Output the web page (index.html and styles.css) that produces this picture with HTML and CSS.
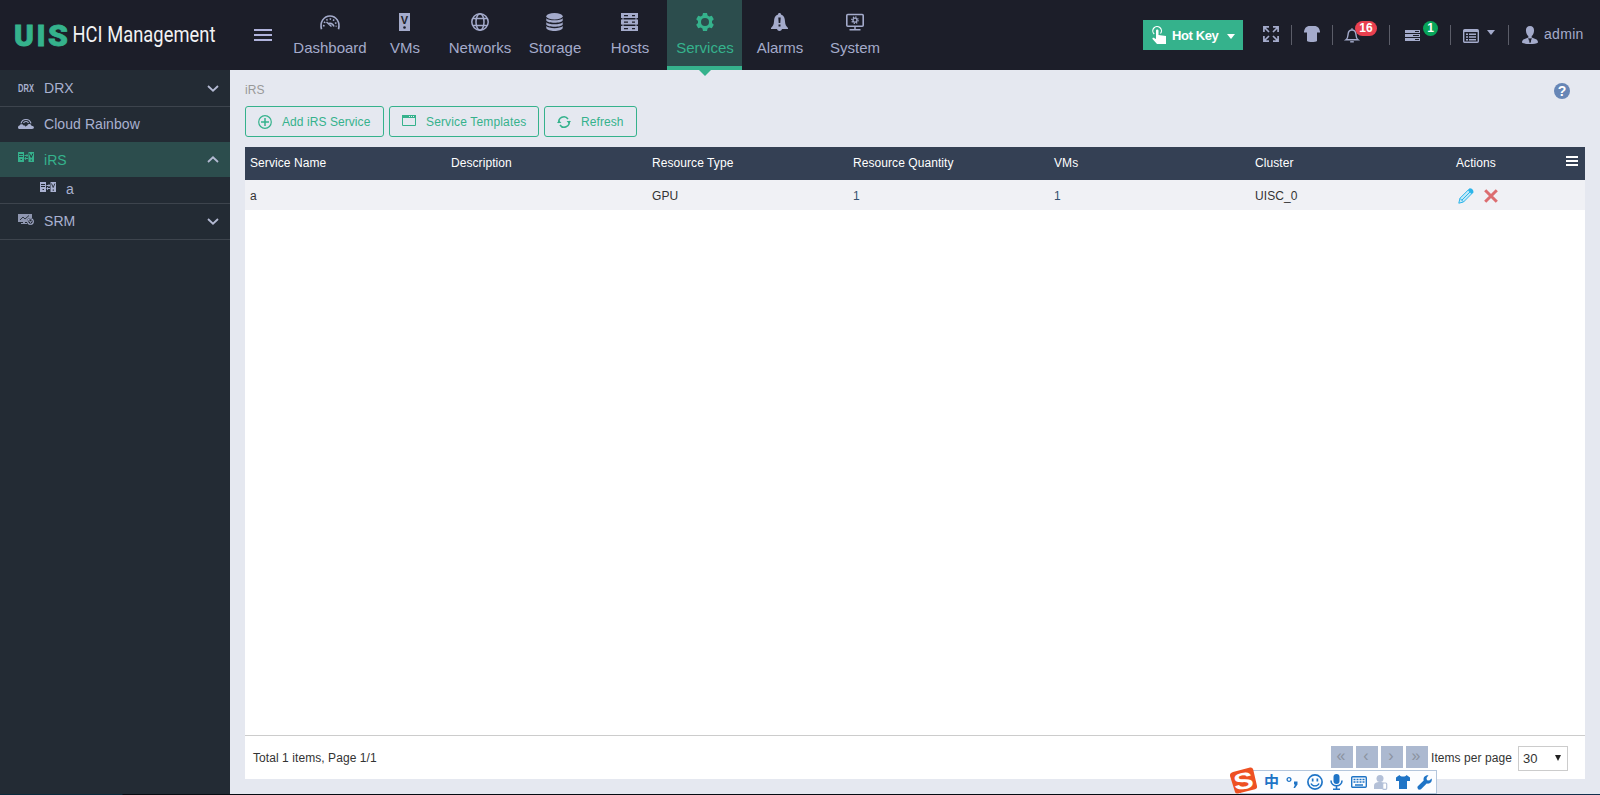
FILE: index.html
```html
<!DOCTYPE html>
<html lang="en">
<head>
    <meta charset="UTF-8">
    <meta name="viewport" content="width=device-width, initial-scale=1.0">
    <title>UIS HCI Management</title>
    <link rel="stylesheet" href="styles.css">
</head>
<body>
    <svg class="defs">
        <symbol id="irs" viewBox="0 0 16 10">
            <path fill="currentColor" fill-rule="evenodd" d="M0 0h6v10H0zM1 2v1h4V2zM1 4v1h4V4zM2.500 7v1H4V7zM10.500 0H16v10h-5.500zM12.700 7.500v1.200h1.200V7.500z"/>
            <path stroke="currentColor" fill="none" d="M6.500 3.500h3.500M6.500 6.500h3.500M9 2.200v2.600M7.500 5.200v2.600"/>
            <path class="cut" d="M11.500 1.500l1.700 4 1.700-4"/>
        </symbol>
    </svg>

    <header class="header">
        <div class="logo">
            <svg width="230" height="70">
                <text class="logo-mark" y="45.500"><tspan x="14" textLength="20" lengthAdjust="spacingAndGlyphs">U</tspan><tspan x="36.500">I</tspan><tspan x="48" textLength="20" lengthAdjust="spacingAndGlyphs">S</tspan></text>
                <text class="logo-name" x="72.500" y="42" textLength="143" lengthAdjust="spacingAndGlyphs">HCI Management</text>
            </svg>
        </div>
        <div class="menu-toggle"><span></span><span></span><span></span></div>
        <nav class="nav">
            <a class="nav-item">
                <svg width="22" height="18" viewBox="0 0 22 18" fill="none" stroke="currentColor"><path stroke-width="1.600" d="M2.500 16.200C.5 9 5 3 11 3s10.500 6 8.500 13.200"/><path stroke-width="1.700" stroke-dasharray="1.500 2" d="M4.800 13.500C4.500 9 7.500 6 11 6s6.500 3 6.200 7.500"/><path stroke-width="1.500" d="M7.500 9l5 4.500M9.500 10.500c3-.8 4.500.5 5.500 3"/></svg>
                <span>Dashboard</span>
            </a>
            <a class="nav-item">
                <svg width="11" height="18" viewBox="0 0 11 18"><path fill="currentColor" d="M0 0h11v18H0z"/><text class="vm-letter" x="5.500" y="10.500">V</text><circle class="dark" cx="5.500" cy="14.500" r="1.300"/></svg>
                <span>VMs</span>
            </a>
            <a class="nav-item">
                <svg width="18" height="18" viewBox="0 0 18 18" fill="none" stroke="currentColor" stroke-width="1.500"><circle cx="9" cy="9" r="8.200"/><ellipse cx="9" cy="9" rx="4" ry="8.200"/><path d="M2 5.500h14M2 12.500h14"/></svg>
                <span>Networks</span>
            </a>
            <a class="nav-item">
                <svg width="17" height="18" viewBox="0 0 17 18" fill="currentColor"><ellipse cx="8.500" cy="3.200" rx="8.200" ry="3.200"/><path d="M.3 5.200c2 2.700 14.400 2.700 16.400 0v2.300c-1 3-15.400 3-16.400 0zM.3 9.200c2 2.700 14.400 2.700 16.400 0v2.200c-1 3-15.400 3-16.400 0zM.3 13.100c2 2.700 14.400 2.700 16.400 0v1.900c-1 4-15.400 4-16.400 0z"/></svg>
                <span>Storage</span>
            </a>
            <a class="nav-item">
                <svg width="17" height="18" viewBox="0 0 17 18"><path fill="currentColor" d="M0 0h17v5H0zM0 6.500h17v5H0zM0 13h17v5H0zM1.500 5h1v9h-1zM14.500 5h1v9h-1z"/><path class="dark" d="M3 2h4v1.200H3zM11 2h3v1.200h-3zM3 8.500h4v1.200H3zM11 8.500h3v1.200h-3zM3 15h4v1.200H3zM11 15h3v1.200h-3z"/></svg>
                <span>Hosts</span>
            </a>
            <a class="nav-item active">
                <svg width="18" height="18" viewBox="0 0 18 18"><path fill="currentColor" fill-rule="evenodd" d="M7 0h4l.6 2.600 1.700 1 2.500-.8 2 3.400L16 8v2l1.800 1.800-2 3.400-2.500-.8-1.700 1L11 18H7l-.6-2.600-1.700-1-2.500.8-2-3.400L2 10V8L.2 6.200l2-3.400 2.500.8 1.700-1zM9 5a4 4 0 1 0 0 8 4 4 0 0 0 0-8z"/></svg>
                <span>Services</span>
            </a>
            <a class="nav-item">
                <svg width="17" height="18" viewBox="0 0 17 18"><path fill="currentColor" d="M8.500 0c1 0 1.500.7 1.500 1.500 3 1 3.800 3.500 4 7 .2 3 1 4.500 3 6.500v1H11c-.5 2.600-4.500 2.600-5 0H0v-1c2-2 2.800-3.500 3-6.500.2-3.500 1-6 4-7C7 .7 7.500 0 8.500 0z"/><path class="dark" d="M7.300 4.500h2.400l-.4 5.500H7.700zM7.500 11.500h2v2h-2z"/></svg>
                <span>Alarms</span>
            </a>
            <a class="nav-item">
                <svg width="18" height="18" viewBox="0 0 18 18" fill="none" stroke="currentColor"><rect x=".8" y="1.500" width="16.400" height="11.800" rx="1" stroke-width="1.600"/><path stroke-width="1.500" d="M9 13v3M3.500 16.800h11"/><circle cx="9" cy="7.200" r="2" stroke-width="1.300"/><circle cx="9" cy="7.200" r="3.200" stroke-width="1.300" stroke-dasharray="1.200 1.310"/></svg>
                <span>System</span>
            </a>
        </nav>
        <div class="tools">
            <button class="hot-key">
                <svg width="15" height="18" viewBox="0 0 15 18"><path fill="none" stroke="#fff" stroke-width="1.200" d="M2.200 8A4.300 4.300 0 1 1 8.500 7.500"/><path fill="#fff" d="M4 4.500C4 3 6.500 3 6.500 4.500V9l7.500 1v8H5l-4.500-5c-.5-1.300 1.200-1.500 2-.8L4 13z"/></svg>
                <span>Hot Key</span>
                <i class="caret"></i>
            </button>
            <div class="tool tool-expand">
                <svg width="16" height="16" viewBox="0 0 16 16" fill="none" stroke="currentColor" stroke-width="1.700"><path d="M6 .9H.9V6M10 .9h5.100V6M6 15.100H.9V10M10 15.100h5.100V10M1 1l5 5M15 1l-5 5M1 15l5-5M15 15l-5-5"/></svg>
            </div>
            <div class="tool tool-skin">
                <svg width="16" height="16" viewBox="0 0 16 16"><path fill="currentColor" d="M4.500 0h7c2.500.5 4 2.500 4.500 5.500v1h-3V15c-1.500 1.300-8.500 1.300-10 0V6.500H0v-1C.5 2.500 2 .5 4.500 0z"/></svg>
            </div>
            <div class="tool tool-alarm">
                <svg width="14" height="15" viewBox="0 0 14 15" fill="none" stroke="currentColor" stroke-width="1.400"><path d="M1 11.800c2-1.500 1.900-3.500 2.100-5.800C3.400 3.300 4.800 2 7 2s3.600 1.300 3.900 4c.2 2.300.1 4.300 2.100 5.800zM7 2V.3"/><path d="M5.200 13.800h3.600"/></svg>
                <span class="badge badge-red">16</span>
            </div>
            <div class="tool tool-task">
                <svg width="15" height="11" viewBox="0 0 15 11"><path fill="currentColor" d="M0 0h15v3H0zM0 4h15v3H0zM0 8h15v3H0z"/><path class="dark" d="M10 1h4v1h-4zM8 5h6v1H8zM10 9h4v1h-4z"/></svg>
                <span class="badge badge-green">1</span>
            </div>
            <div class="tool tool-list">
                <svg width="16" height="14" viewBox="0 0 16 14"><rect x=".7" y=".7" width="14.600" height="12.600" rx="1" fill="none" stroke="currentColor" stroke-width="1.400"/><path fill="currentColor" d="M1 1h14v2H1zM3 4.500h2v1.500H3zM6 4.500h7v1.500H6zM3 7.200h2v1.500H3zM6 7.200h7v1.500H6zM3 10h2v1.500H3zM6 10h7v1.500H6z"/></svg>
                <i class="caret"></i>
            </div>
            <div class="tool tool-user">
                <svg width="16" height="18" viewBox="0 0 16 18"><path fill="currentColor" d="M8 0c3 0 4.300 2 4 5-.2 2.500-1 4-2.300 5v1.500l4.300 1.700c1.500.6 2 2 2 3.300-2 2-14 2-16 0 0-1.300.5-2.700 2-3.300l4.300-1.700V10C5 9 4.200 7.500 4 5c-.3-3 1-5 4-5z"/><path class="dark" d="M6 11.500l1.500 5-.2-3.500zM10 11.500l-1.500 5 .2-3.500zM7.500 12h1l.5 4-1 1-1-1z"/></svg>
                <span>admin</span>
            </div>
        </div>
    </header>

    <div class="wrapper">
        <aside class="sidebar">
            <div class="side-item line">
                <svg class="side-icon" width="16" height="10"><text class="drx" x="0" y="9" textLength="16" lengthAdjust="spacingAndGlyphs">DRX</text></svg>
                <span>DRX</span>
                <svg class="arrow" width="12" height="7" viewBox="0 0 12 7"><path d="M1 1l5 4.700L11 1"/></svg>
            </div>
            <div class="side-item rainbow">
                <svg class="side-icon" width="16" height="10" viewBox="0 0 16 10"><path fill="none" stroke="currentColor" stroke-width="1.200" d="M3 4.300C4.500-.8 11.500-.8 13 4.300M5.500 4c1-2 4-2 5 0"/><path fill="currentColor" d="M0 8.500c0-1.500 1-2 1.700-2C2 4.800 5 4.800 5.500 6.500 7 6.300 7.600 7 7.700 8c.1-.7.800-1.200 1.500-1.200C9.700 4.500 13 4.500 13.500 6.800c3 0 3.300 3.200.5 3.200H1.500C.5 10 0 9.300 0 8.500z"/></svg>
                <span>Cloud Rainbow</span>
            </div>
            <div class="side-item active">
                <svg class="side-icon raised" width="16" height="10"><use href="#irs"/></svg>
                <span>iRS</span>
                <svg class="arrow" width="12" height="7" viewBox="0 0 12 7"><path d="M1 6l5-4.700L11 6"/></svg>
            </div>
            <div class="side-sub line">
                <svg class="side-icon" width="16" height="10"><use href="#irs"/></svg>
                <span>a</span>
            </div>
            <div class="side-item line srm">
                <svg class="side-icon raised" width="16" height="11" viewBox="0 0 16 11"><path fill="currentColor" opacity=".8" d="M0 0h14v4h-3l-2 2v2H7v1h2v1H3V9h2V8H0z"/><path class="cut" d="M2 6l3-3 2 2 4-3.500"/><circle cx="12.500" cy="7.500" r="2.800" fill="none" stroke="currentColor" stroke-width="1.100"/><path fill="none" stroke="currentColor" d="M11.300 6.500l1.200 2 1.200-2"/></svg>
                <span>SRM</span>
                <svg class="arrow" width="12" height="7" viewBox="0 0 12 7"><path d="M1 1l5 4.700L11 1"/></svg>
            </div>
        </aside>

        <main class="content">
            <div class="crumb">
                <span>iRS</span>
                <span class="help">?</span>
            </div>
            <div class="buttons">
                <button class="btn btn-add">
                    <svg width="14" height="14" viewBox="0 0 14 14" fill="none" stroke="currentColor" stroke-width="1.200"><circle cx="7" cy="7" r="6.300"/><path stroke-width="1.500" d="M7 3v8M3 7h8"/></svg>
                    <span>Add iRS Service</span>
                </button>
                <button class="btn btn-templates">
                    <svg width="14" height="11" viewBox="0 0 14 11"><path fill="none" stroke="currentColor" d="M.5.5h13v10H.5z"/><path fill="currentColor" d="M0 0h14v3H0z"/><path stroke="#e5e8f0" stroke-dasharray="1 1" d="M7 1.500h6"/></svg>
                    <span>Service Templates</span>
                </button>
                <button class="btn btn-refresh">
                    <svg width="14" height="12" viewBox="0 0 14 12"><path fill="none" stroke="currentColor" stroke-width="1.500" d="M2 7A5 5 0 0 1 11 3M12 5a5 5 0 0 1-9 4"/><path fill="currentColor" d="M0 7h4.400L2 4.300zM9.600 5H14l-2 2.700z"/></svg>
                    <span>Refresh</span>
                </button>
            </div>
            <div class="panel">
                <div class="row head">
                    <span>Service Name</span>
                    <span>Description</span>
                    <span>Resource Type</span>
                    <span>Resource Quantity</span>
                    <span>VMs</span>
                    <span>Cluster</span>
                    <span>Actions</span>
                    <div class="columns-toggle"><i></i><i></i><i></i></div>
                </div>
                <div class="row">
                    <span>a</span>
                    <span></span>
                    <span>GPU</span>
                    <span><a>1</a></span>
                    <span><a>1</a></span>
                    <span>UISC_0</span>
                    <span class="actions">
                        <svg width="16" height="16" viewBox="0 0 16 16"><path fill="#c4e9f8" stroke="#2cb5ea" d="M.8 15.200l1.200-5L11 1.200c1.200-1 4.500 2 3.600 3.600L5.500 14zM2.200 10.500l3.200 3.300M3.800 12.200l8.700-8.700"/><path fill="#2cb5ea" d="M10 2.500l1.500-1.700c2-1 4.500 1.500 3.700 3.500L13.500 6z"/></svg>
                        <svg width="14" height="14" viewBox="0 0 14 14"><path stroke="#dc6d70" stroke-width="3" d="M1.200 1.200l11.600 11.600M12.800 1.200L1.200 12.800"/></svg>
                    </span>
                </div>
                <div class="footer">
                    <span>Total 1 items, Page 1/1</span>
                    <div class="pager">
                        <b>«</b><b>‹</b><b>›</b><b>»</b>
                        <span>Items per page</span>
                        <div class="select"><span>30</span><i></i></div>
                    </div>
                </div>
            </div>
        </main>
    </div>

    <div class="ime">
        <svg class="ime-logo" width="30" height="28" viewBox="0 0 30 28"><path fill="#ee5123" d="M4 5L21 .5q2.500-.5 3.200 2L28 19q.5 2.500-2 3.200L9 26.500q-2.500.5-3-1.500L1 9Q.5 6 4 5z"/><text x="14.500" y="22" transform="rotate(-10 14 14)" textLength="20" lengthAdjust="spacingAndGlyphs">S</text></svg>
        <span class="ime-zh">中</span>
        <svg width="13" height="14" viewBox="0 0 13 14"><circle cx="3" cy="4.500" r="1.900" fill="none" stroke="currentColor" stroke-width="1.300"/><path fill="currentColor" d="M8 6.500h3.500V9.500L9 13H7.500L9 9.500H8z"/></svg>
        <svg width="16" height="16" viewBox="0 0 16 16"><circle cx="8" cy="8" r="7.100" fill="none" stroke="currentColor" stroke-width="1.700"/><path fill="currentColor" d="M4.800 4.500h1.700v3H4.800zM9.500 4.500h1.700v3H9.500z"/><path fill="none" stroke="currentColor" stroke-width="1.400" d="M4 9.500c1.500 3.200 6.500 3.200 8 0"/></svg>
        <svg width="13" height="16" viewBox="0 0 13 16"><rect x="3.500" y="0" width="6" height="10" rx="3" fill="currentColor"/><path fill="none" stroke="currentColor" stroke-width="1.600" d="M1 6.500c0 7 11 7 11 0M6.500 12v3M3 15.200h7"/></svg>
        <svg width="16" height="12" viewBox="0 0 16 12"><rect x=".7" y=".7" width="14.600" height="10.600" rx="1" fill="none" stroke="currentColor" stroke-width="1.400"/><path stroke="currentColor" stroke-width="1.700" stroke-dasharray="2 1" d="M2.500 3.500h11M2.500 6h11"/><path stroke="currentColor" stroke-width="1.500" d="M4 9h8"/></svg>
        <svg class="faded" width="14" height="15" viewBox="0 0 14 15"><circle cx="6" cy="3.500" r="3.500" fill="currentColor"/><path fill="currentColor" d="M0 14V11c0-3 2-4 6-4 2 0 3 .3 4 1v6z"/><rect x="8.700" y="8" width="4" height="6.300" rx="1" fill="#fff" stroke="currentColor" stroke-width="1.200"/></svg>
        <svg width="14" height="14" viewBox="0 0 14 14"><path fill="currentColor" d="M3.500 0c1 2 6 2 7 0L14 2.500V6h-3v8H3V6H0V2.500z"/></svg>
        <svg width="15" height="15" viewBox="0 0 15 15"><path fill="currentColor" d="M11.500.3L9.500 3l.5 2.300 2.200.3L14.700 3.500c.8 3.500-2 5.800-5 5L4 14.300c-2 1.500-4.500-1-3.200-3L6.700 5.500C6 2.500 8 0 11.500.3z"/></svg>
    </div>
    <div class="taskbar"></div>
</body>
</html>
```
FILE: styles.css
```css
* {
    box-sizing: border-box;
}

body {
    margin: 0;
    height: 795px;
    overflow: hidden;
    font-family: "Liberation Sans", Arial, sans-serif;
    font-size: 12px;
    letter-spacing: 0.07px;
    background: #e5e8f0;
    color: #333;
    display: flex;
    flex-direction: column;
}

svg {
    display: block;
    flex: none;
    overflow: visible;
}

button {
    font-family: inherit;
    letter-spacing: inherit;
}

.defs {
    display: none;
}

/* header */
.header {
    display: flex;
    height: 70px;
    flex: none;
    background: #1c1e29;
    color: #a4abcb;
}

.dark {
    fill: #1c1e29;
}

.logo {
    width: 230px;
}

.logo-mark {
    font: 900 30px Roboto, sans-serif;
    fill: #35b28c;
    stroke: #35b28c;
    stroke-width: 0.8px;
}

.logo-name {
    font: 400 21.5px Roboto, sans-serif;
    fill: #f2f2f4;
}

.menu-toggle {
    width: 62px;
    padding: 29px 0 0 24px;
}

.menu-toggle span {
    display: block;
    width: 18px;
    height: 2px;
    margin-bottom: 3px;
    background: #b0b3dc;
}

.nav {
    display: flex;
}

.nav-item {
    position: relative;
    width: 75px;
    padding-top: 13px;
    display: flex;
    flex-direction: column;
    align-items: center;
    font-size: 15px;
    line-height: 18px;
    letter-spacing: 0;
}

.nav-item span {
    margin: 8px -1px 0 0;
}

.nav-item.active {
    background: #2c4d4d;
    color: #35b28c;
    border-bottom: 4px solid #35b28c;
}

.nav-item.active::after {
    content: "";
    position: absolute;
    top: 70px;
    left: 32px;
    border: 6px solid transparent;
    border-top-color: #35b28c;
    border-bottom: 0;
}

.vm-letter {
    font: bold 11px "Liberation Sans", sans-serif;
    text-anchor: middle;
    fill: #1c1e29;
}

.tools {
    display: flex;
    align-items: center;
    margin-left: auto;
}

.hot-key {
    display: flex;
    align-items: center;
    width: 100px;
    height: 30px;
    padding: 0 8px 0 9px;
    border: 0;
    background: #35b28c;
    color: #fff;
    font-size: 13px;
    font-weight: bold;
    letter-spacing: -0.4px;
}

.hot-key svg {
    margin-right: 5px;
}

.caret {
    border: 4px solid transparent;
    border-top: 5px solid currentColor;
    border-bottom: 0;
}

.hot-key .caret {
    margin-left: auto;
    margin-top: 2px;
}

.tool {
    display: flex;
    height: 20px;
    border-right: 1px solid #5b5d68;
    position: relative;
}

.tool-expand {
    width: 49px;
    padding: 1px 0 0 20px;
}

.tool-skin {
    width: 41px;
    padding: 1px 0 0 12px;
}

.tool-alarm {
    width: 57px;
    padding: 3px 0 0 12px;
}

.tool-task {
    width: 61px;
    padding: 5px 0 0 15px;
}

.tool-list {
    width: 58px;
    padding: 4px 0 0 12px;
}

.tool-list .caret {
    margin: 1px 0 0 8px;
}

.tool-user {
    width: 91px;
    padding: 1px 0 0 13px;
    border-right: 0;
    font-size: 14px;
    letter-spacing: 0.3px;
    line-height: 17px;
}

.tool-user span {
    margin-left: 6px;
}

.badge {
    position: absolute;
    top: -4px;
    height: 15px;
    border-radius: 8px;
    color: #fff;
    font-size: 12px;
    font-weight: bold;
    line-height: 14px;
    text-align: center;
}

.badge-red {
    left: 22px;
    width: 22px;
    background: #e8404f;
}

.badge-green {
    left: 33px;
    width: 15px;
    background: #08a55a;
}

/* sidebar */
.wrapper {
    display: flex;
    flex: 1;
    min-height: 0;
}

.sidebar {
    width: 230px;
    flex: none;
    background: #232b34;
    color: #a9b1d0;
    font-size: 14px;
}

.side-item {
    display: flex;
    align-items: center;
    height: 35px;
    padding: 0 11px 0 18px;
}

.side-item.line {
    height: 36px;
}

.side-item:first-child {
    height: 37px;
}

.side-item.rainbow {
    padding-bottom: 2px;
}

.srm span {
    margin-top: -2px;
}

.line {
    border-bottom: 1px solid #3d444d;
}

.side-icon {
    margin-right: 10px;
}

.raised {
    margin-top: -5px;
}

.side-item.active {
    background: #2c4d4d;
    color: #35b28c;
}

.side-sub {
    display: flex;
    align-items: center;
    height: 27px;
    padding-left: 40px;
}

.side-sub .side-icon {
    margin-top: -6px;
}

.side-sub span {
    margin-top: -3px;
}

.drx {
    font: bold 11.5px "Liberation Sans", sans-serif;
    fill: #a9b1d0;
}

.cut {
    fill: none;
    stroke: #232b34;
    stroke-width: 0.9px;
}

.arrow {
    margin-left: auto;
    fill: none;
    stroke: #b4bad3;
    stroke-width: 1.8px;
}

/* content */
.content {
    flex: 1;
    display: flex;
    flex-direction: column;
    padding: 0 15px 16px;
}

.crumb {
    display: flex;
    justify-content: space-between;
    height: 36px;
    padding: 13px 15px 0 0;
    color: #999;
    line-height: 14px;
}

.help {
    width: 16px;
    height: 16px;
    border-radius: 8px;
    background: #6786b6;
    color: #fff;
    font-size: 14px;
    font-weight: bold;
    line-height: 16px;
    text-align: center;
}

.buttons {
    display: flex;
    gap: 5px;
    margin-bottom: 10px;
}

.btn {
    display: flex;
    align-items: center;
    height: 31px;
    padding: 0 12px;
    border: 1px solid #35b28c;
    border-radius: 3px;
    background: transparent;
    color: #35b28c;
    font-size: 12px;
    white-space: nowrap;
}

.btn svg {
    margin-right: 10px;
}

.btn-add {
    width: 139px;
}

.btn-templates {
    width: 150px;
    letter-spacing: 0.15px;
}

.btn-templates svg {
    margin-top: -3px;
}

.btn-refresh {
    width: 93px;
}

.panel {
    flex: 1;
    display: flex;
    flex-direction: column;
    background: #fff;
}

.row {
    display: grid;
    grid-template-columns: repeat(6, 201px) 1fr auto;
    align-items: center;
    height: 30px;
    padding-top: 1px;
    background: #f0f1f5;
}

.row > span {
    padding-left: 5px;
}

.row a {
    color: #34506e;
}

.head {
    height: 33px;
    padding: 0 0 2px;
    background: #344054;
    color: #fff;
}

.columns-toggle {
    padding-right: 7px;
    margin-top: -5px;
}

.columns-toggle i {
    display: block;
    width: 12px;
    height: 2px;
    margin-top: 2px;
    background: #fff;
}

.actions {
    display: flex;
    align-items: center;
    gap: 10px;
}

.row > .actions {
    padding-left: 7px;
}

.footer {
    display: flex;
    justify-content: space-between;
    height: 44px;
    margin-top: auto;
    padding: 0 17px 0 8px;
    border-top: 1px solid #ccc;
    line-height: 45px;
}

.pager {
    display: flex;
    gap: 3px;
}

.pager b {
    width: 22px;
    height: 22px;
    margin-top: 10px;
    padding-right: 2px;
    background: #acb9d0;
    color: #8b929f;
    font-size: 16px;
    font-weight: normal;
    line-height: 19px;
    text-align: center;
}

.pager > span {
    width: 84px;
}

.select {
    display: flex;
    align-items: center;
    justify-content: space-between;
    width: 50px;
    height: 25px;
    margin-top: 10px;
    padding: 0 6px 0 4px;
    border: 1px solid #ccc;
    font-size: 13px;
    line-height: 23px;
}

.select i {
    border: 3.5px solid transparent;
    border-top: 6px solid #222;
    border-bottom: 0;
    margin-top: -2px;
}

/* input method bar floating over the page */
.ime {
    position: absolute;
    left: 1240px;
    top: 770px;
    width: 197px;
    height: 24px;
    display: flex;
    align-items: center;
    justify-content: space-between;
    padding: 0 4px 0 23px;
    border: 1px solid #b4c6dc;
    background: #fcfdff;
    color: #1f74c6;
}

.ime-logo {
    position: absolute;
    left: -12px;
    top: -4px;
}

.ime-logo text {
    font: bold 23px "Liberation Sans", sans-serif;
    text-anchor: middle;
    fill: #fff;
}

.ime-zh {
    font: bold 15px/20px "Noto Sans CJK SC", sans-serif;
    margin-top: -2px;
}

.faded {
    color: #b3c0d8;
}

.taskbar {
    position: absolute;
    left: 0;
    top: 794px;
    width: 100%;
    height: 1px;
    background: linear-gradient(90deg, #0b2a3c 122px, #060b12 123px, #060b12 1230px, #12304f);
}
```
